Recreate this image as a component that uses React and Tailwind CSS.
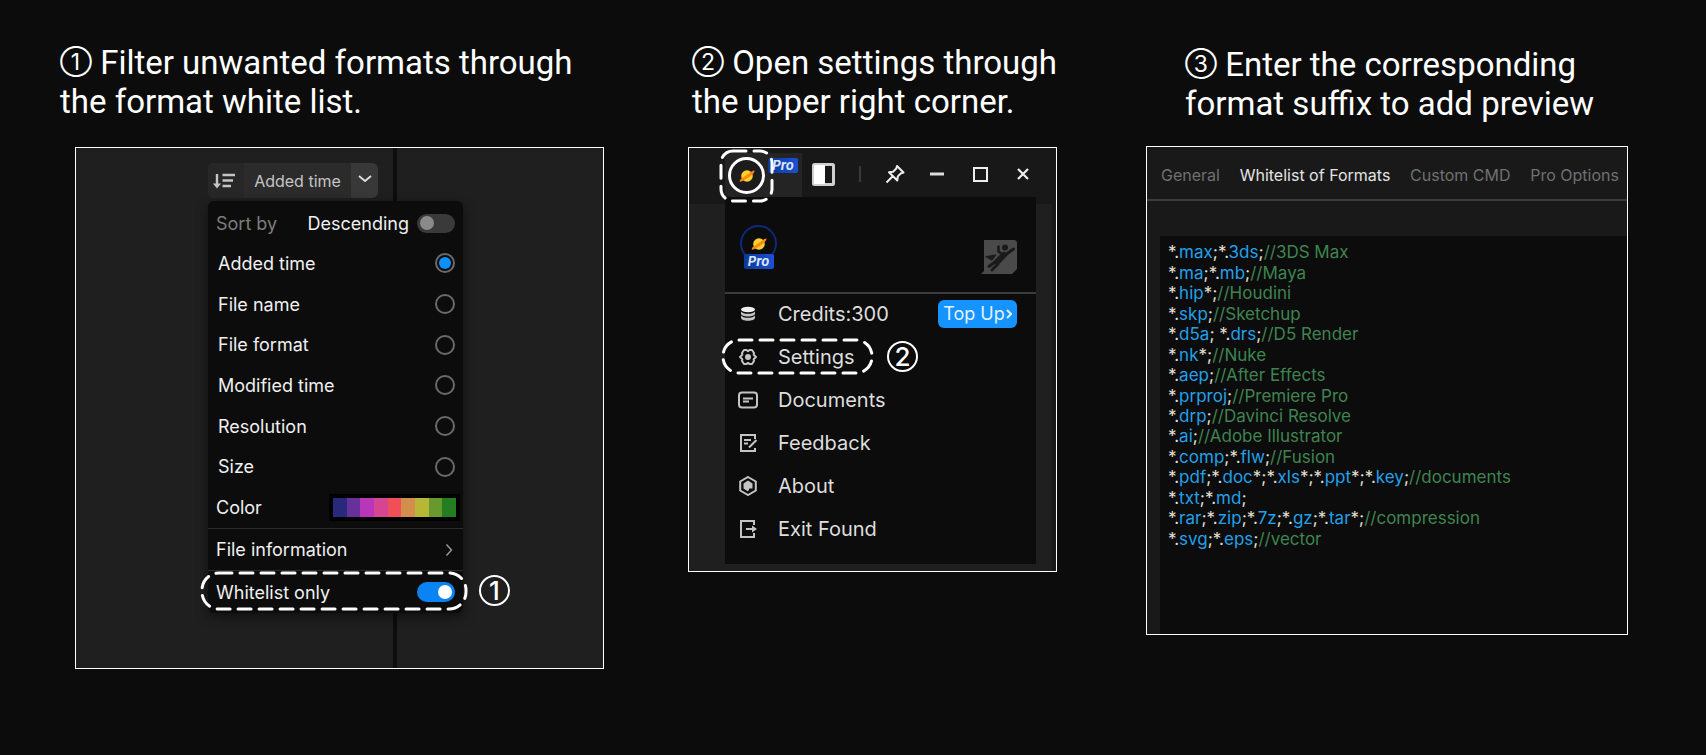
import { useState } from "react";

const SORT_OPTIONS = [
  "Added time",
  "File name",
  "File format",
  "Modified time",
  "Resolution",
  "Size",
];

const SWATCHES = [
  "bg-[#28287d]",
  "bg-[#67309a]",
  "bg-[#b836b8]",
  "bg-[#d64592]",
  "bg-[#f04f57]",
  "bg-[#d18f4b]",
  "bg-[#b8b636]",
  "bg-[#67992e]",
  "bg-[#257d22]",
];

const MENU_ITEMS = ["Credits:300", "Settings", "Documents", "Feedback", "About", "Exit Found"];

const FORMATS = [
  ["*.max;*.3ds;", "//3DS Max"],
  ["*.ma;*.mb;", "//Maya"],
  ["*.hip*;", "//Houdini"],
  ["*.skp;", "//Sketchup"],
  ["*.d5a; *.drs;", "//D5 Render"],
  ["*.nk*;", "//Nuke"],
  ["*.aep;", "//After Effects"],
  ["*.prproj;", "//Premiere Pro"],
  ["*.drp;", "//Davinci Resolve"],
  ["*.ai;", "//Adobe Illustrator"],
  ["*.comp;*.flw;", "//Fusion"],
  ["*.pdf;*.doc*;*.xls*;*.ppt*;*.key;", "//documents"],
  ["*.txt;*.md;", ""],
  ["*.rar;*.zip;*.7z;*.gz;*.tar*;", "//compression"],
  ["*.svg;*.eps;", "//vector"],
];

const TABS = ["General", "Whitelist of Formats", "Custom CMD", "Pro Options"];

function Heading({ number, className = "", children }) {
  return (
    <h2
      className={`whitespace-nowrap text-[33px] leading-[39px] text-white font-[Roboto,sans-serif] ${className}`}
    >
      <span className="align-[4px] text-[23px] leading-none font-[Inter,sans-serif]">{number}</span> {children}
    </h2>
  );
}

function Step({ number }) {
  return (
    <span className="flex size-[31px] shrink-0 items-center justify-center rounded-full border-2 border-white text-[26px] leading-none font-medium text-white font-[Inter,sans-serif]">
      {number}
    </span>
  );
}

// Dashed outline drawn over the control that the step points to
function Dashes({ className, radius, dash = "13 8" }) {
  return (
    <svg className={`pointer-events-none absolute overflow-visible ${className}`} aria-hidden="true">
      <rect
        width="100%"
        height="100%"
        rx={radius}
        fill="none"
        stroke="#fff"
        strokeWidth="3"
        strokeDasharray={dash}
        strokeLinecap="round"
      />
    </svg>
  );
}

function Planet({ className }) {
  return (
    <svg viewBox="0 0 16 14" className={className} aria-hidden="true">
      <circle cx="8" cy="7" r="5.8" fill="#fdd02f" />
      <path d="M.8 12.4C.2 11 3 9.200 7 6.600 11 3.900 14.400 1 15.300 1.700 16.200 2.600 13.300 5.900 9.400 8.500 5.500 11.200 1.500 13.400.8 12.400Z" fill="#f88c12" />
    </svg>
  );
}

function ProBadge() {
  return (
    <span className="flex h-[15px] w-[30px] items-center justify-center rounded-xs bg-linear-to-r from-[#0b3a96] to-[#1b50d8] text-[13px] leading-none font-bold text-[#dce6fb] italic font-[Inter,sans-serif]">
      Pro
    </span>
  );
}

function SortPanel() {
  const [sort, setSort] = useState("Added time");
  const [descending, setDescending] = useState(false);
  const [whitelist, setWhitelist] = useState(true);

  return (
    <div className="relative ml-[15px] h-[522px] border border-white bg-[#1f1f1f] pt-[15px] pl-[132px]">
      <div className="absolute inset-y-0 left-[317px] w-1 bg-[#0d0d0d]" />

      <div className="relative flex h-[35px] w-[170px] overflow-hidden rounded-md bg-[#2b2b2b] text-[#c4c4c4]">
        <button type="button" aria-label="Sort order" className="flex w-9 items-center justify-center bg-[#272727] pr-1">
          <svg viewBox="0 0 24 18" className="h-[18px] w-6" fill="none" stroke="currentColor" strokeWidth="2.400" aria-hidden="true">
            <path d="M5 2v11" />
            <path d="M1 11.500h8L5 16.500Z" fill="currentColor" stroke="none" />
            <path d="M10.500 3h12.500M10.500 8.500h10.500M10.500 14h8.500" />
          </svg>
        </button>
        <button type="button" className="flex-1 text-[16px]">
          Added time
        </button>
        <button type="button" aria-label="Open sort menu" className="flex w-[27px] items-center justify-center bg-[#383838] pb-1">
          <svg viewBox="0 0 14 8" className="h-2 w-3.5" fill="none" stroke="#e0e0e0" strokeWidth="1.800" aria-hidden="true">
            <path d="M1 1l6 5 6-5" />
          </svg>
        </button>
      </div>

      <div className="relative mt-[3px] w-[255px] rounded-md bg-[#0c0c0c] pt-0.5 text-[18px] text-[#f0f0f0] shadow-[0_4px_12px_rgba(0,0,0,0.5)]">
        <label className="flex h-10 items-center pr-2 pl-2">
          <span className="text-[#7c7c7c]">Sort by</span>
          <span className="mr-2 ml-auto">Descending</span>
          <input
            type="checkbox"
            checked={descending}
            onChange={(e) => setDescending(e.target.checked)}
            className="flex h-[19px] w-[38px] appearance-none items-center rounded-full bg-[#3a3a3a] px-[3px] before:size-3.5 before:rounded-full before:bg-[#8a8a8a] checked:bg-[#0a84f5] checked:before:ml-auto checked:before:bg-white"
          />
        </label>

        <div className="grid h-[285px] auto-rows-fr">
          {SORT_OPTIONS.map((option) => (
            <label key={option} className="flex items-center justify-between pr-2 pl-2.5">
              {option}
              <input
                type="radio"
                name="sort"
                checked={sort === option}
                onChange={() => setSort(option)}
                className="flex size-5 appearance-none items-center justify-center rounded-full border-2 border-[#6a6a6a] before:size-3 before:rounded-full checked:before:bg-[#0a90ff]"
              />
            </label>
          ))}
          <div className="flex items-center justify-between pr-[3px] pl-2">
            Color
            <div className="flex h-[27px] w-[131px] bg-black p-1">
              {SWATCHES.map((color) => (
                <button key={color} type="button" aria-label="Color" className={`flex-1 ${color}`} />
              ))}
            </div>
          </div>
        </div>

        <button type="button" className="flex h-[42px] w-full items-center justify-between border-t border-[#2c2c2c] pr-2.5 pl-2">
          File information
          <svg viewBox="0 0 8 12" className="h-3 w-2" fill="none" stroke="#9a9a9a" strokeWidth="1.400" aria-hidden="true">
            <path d="M1.500 0.500l5 5.500-5 5.500" />
          </svg>
        </button>

        <div className="relative border-t border-[#2c2c2c]">
          <label className="flex h-[42px] items-center justify-between pr-2 pl-2">
            Whitelist only
            <input
              type="checkbox"
              checked={whitelist}
              onChange={(e) => setWhitelist(e.target.checked)}
              className="flex h-5 w-[38px] appearance-none items-center rounded-full bg-[#3a3a3a] px-[3px] before:size-3.5 before:rounded-full before:bg-[#8a8a8a] checked:bg-[#0a84f5] checked:before:ml-auto checked:before:bg-white"
            />
          </label>
          <Dashes className="top-0.5 -left-1.5 h-9 w-[264px]" radius="17" />
          <div className="absolute top-1 left-[271px]">
            <Step number="1" />
          </div>
        </div>
      </div>
    </div>
  );
}

function MenuIcon({ name }) {
  return (
    <svg viewBox="0 0 20 20" className="size-5" fill="none" stroke="#c4c4c4" strokeWidth="2" aria-hidden="true">
      {name === "Credits:300" && (
        <g fill="#c4c4c4" stroke="none">
          <ellipse cx="10" cy="5.500" rx="7" ry="2.800" fill="#eee" />
          <path d="M3 7.500c1 1.800 4 2.300 7 2.300s6-.5 7-2.300v2.200c0 1.500-3 2.800-7 2.800s-7-1.300-7-2.800Z" />
          <path d="M3 11.500c1 1.800 4 2.300 7 2.300s6-.5 7-2.300v2.200c0 1.700-3 3-7 3s-7-1.300-7-3Z" />
        </g>
      )}
      {name === "Settings" && (
        <>
          <path d="M6 3h2.500L10 4.200 11.500 3H14l2 3-.3 1.800L18 10l-2.300 2.200.3 1.800-2 3h-2.500L10 15.800 8.500 17H6l-2-3 .3-1.800L2 10l2.300-2.200L4 6Z" strokeLinejoin="round" />
          <circle cx="10" cy="10" r="3" fill="#c4c4c4" stroke="none" />
        </>
      )}
      {name === "Documents" && (
        <>
          <rect x="1" y="2.500" width="18" height="15" rx="3" />
          <path d="M5 8.500h10M5 11.500h6" />
        </>
      )}
      {name === "Feedback" && <path d="M17 6V2H3v16h14v-3M6 7h7M6 10.500h4M11 14.500l7.500-7.500" />}
      {name === "About" && (
        <>
          <path d="M10 1l7.800 4.500v9L10 19l-7.800-4.500v-9Z" />
          <path d="M10 4.500l4.500 3v5h-3L10 15.500l-4.500-3v-5Z" fill="#c4c4c4" stroke="none" />
        </>
      )}
      {name === "Exit Found" && (
        <>
          <path d="M16 6V2H3v16h13v-4M8 10h8" />
          <path d="M14 6.500l5 3.500-5 3.500Z" fill="#c4c4c4" stroke="none" />
        </>
      )}
    </svg>
  );
}

function AccountPanel() {
  return (
    <div className="h-[425px] border border-white bg-[#181818]">
      <div className="flex h-[49px] pt-[5px] pr-[27px] pl-9 text-white">
        <button type="button" aria-label="Account" className="relative w-[77px] bg-[#242424]">
          <span className="absolute top-1 left-[3px] flex size-[37px] items-center justify-center rounded-full border-3 border-white bg-[#1c1c1c]">
            <Planet className="h-3.5 w-4" />
          </span>
          <span className="absolute top-[5px] right-1">
            <ProBadge />
          </span>
          <Dashes className="-top-0.5 -left-1 h-[50px] w-[51px]" radius="12" />
        </button>
        <div className="flex flex-1 items-center justify-between pb-0.5 pl-2.5">
          <div className="flex items-center gap-6">
            <button type="button" aria-label="Toggle sidebar">
              <svg viewBox="0 0 23 23" className="size-[23px]" aria-hidden="true">
                <rect x="1.500" y="1.500" width="20" height="20" rx="1" fill="#181818" stroke="#d0d0d0" strokeWidth="3" />
                <path d="M2 2h11v19H2Z" fill="#fff" />
              </svg>
            </button>
            <span className="h-4 w-0.5 bg-[#3a3a3a]" />
            <button type="button" aria-label="Pin window">
              <svg viewBox="0 0 20 20" className="size-5" fill="none" stroke="#eee" strokeWidth="2" strokeLinejoin="round" aria-hidden="true">
                <path d="M12 2l6.500 6.500-2.500.7-3.200 3.200-.5 4.100-8.300-8.300 4.100-.5L11.300 4.500ZM7.500 12.500L1.500 18.500" />
              </svg>
            </button>
          </div>
          <div className="flex items-center gap-[29px]">
            <button type="button" aria-label="Minimize">
              <svg viewBox="0 0 14 14" className="size-3.5" aria-hidden="true">
                <path d="M0 7h14" stroke="#ddd" strokeWidth="3" />
              </svg>
            </button>
            <button type="button" aria-label="Maximize">
              <svg viewBox="0 0 15 15" className="size-[15px]" aria-hidden="true">
                <path d="M1 1h13v13H1Z" fill="none" stroke="#eee" strokeWidth="2" />
              </svg>
            </button>
            <button type="button" aria-label="Close">
              <svg viewBox="0 0 12 12" className="size-3" aria-hidden="true">
                <path d="M1 1l10 10M11 1L1 11" stroke="#eee" strokeWidth="2.200" />
              </svg>
            </button>
          </div>
        </div>
      </div>

      <div className="mt-[7px] mr-1 flex h-[367px] bg-[#1f1f1f] pr-4 pl-9">
        <div className="-mt-[7px] h-[367px] flex-1 bg-[#0c0c0c]">
          <div className="flex h-[97px] justify-between border-b-2 border-[#3c3c3c] pt-7 pr-[19px] pl-[15px]">
            <div className="flex flex-col items-center">
              <span className="flex size-[37px] shrink-0 items-center justify-center rounded-full border-2 border-[#0c2a78]">
                <Planet className="h-3.5 w-4" />
              </span>
              <span className="relative -mt-2">
                <ProBadge />
              </span>
            </div>
            <svg viewBox="0 0 36 34" className="mt-[15px] h-[34px] w-9" aria-hidden="true">
              <path d="M3 0h30a3 3 0 0 1 3 3v26l-5 5H0l3-3Z" fill="#4a4a4a" />
              <g fill="none" stroke="#1a1a1a" strokeWidth="3" strokeLinecap="round" strokeLinejoin="round">
                <circle cx="24" cy="7.500" r="3" fill="#1a1a1a" stroke="none" />
                <path d="M32.500 9L25 14.500" />
                <path d="M17.500 6.500v5l4 3" strokeWidth="2.500" />
                <path d="M23 15L16 22" strokeWidth="6" />
                <path d="M14 22L8 26.500M17 24l-6 6" />
                <path d="M5 16.500l10-1.500-4 5Z" fill="#1a1a1a" strokeWidth="1" />
              </g>
            </svg>
          </div>

          <ul className="-mt-0.5 text-[20px] text-[#dedede]">
            {MENU_ITEMS.map((name) => (
              <li key={name} className="relative flex h-[43px] items-center justify-between pr-[19px] pl-[13px]">
                <button type="button" className="flex items-center gap-5 whitespace-nowrap">
                  <MenuIcon name={name} />
                  {name}
                </button>
                {name === "Credits:300" && (
                  <button
                    type="button"
                    className="flex h-7 w-[79px] items-center justify-center gap-px rounded-md bg-[#1593ff] text-[18px] text-[#e4f2ff]"
                  >
                    Top Up
                    <svg viewBox="0 0 6 10" className="h-2.5 w-1.5" fill="none" stroke="currentColor" strokeWidth="2" aria-hidden="true">
                      <path d="M1 1l4 4-4 4" />
                    </svg>
                  </button>
                )}
                {name === "Settings" && (
                  <>
                    <Dashes className="top-[5px] -left-0.5 h-[33px] w-[149px]" radius="16" />
                    <div className="absolute top-1.5 left-[162px]">
                      <Step number="2" />
                    </div>
                  </>
                )}
              </li>
            ))}
          </ul>
        </div>
      </div>
    </div>
  );
}

function FormatLine({ rule, note }) {
  return (
    <span className="flex flex-1 items-center whitespace-pre">
      <span>
        {rule.split(/([a-z0-9]+)/).map((part, i) =>
          i % 2 ? (
            <span key={i} className="text-[#23a0ea]">
              {part}
            </span>
          ) : (
            part
          )
        )}
        <span className="text-[#3f8450]">{note}</span>
      </span>
    </span>
  );
}

function FormatsPanel() {
  const [tab, setTab] = useState("Whitelist of Formats");

  return (
    <div className="ml-[5px] flex h-[489px] flex-col border border-white bg-[#191919]">
      <nav className="flex h-[54px] items-center justify-between border-b-2 border-[#3c3c3c] pt-1 pr-2 pl-3.5 text-[16px]">
        {TABS.map((name) => (
          <button
            key={name}
            type="button"
            onClick={() => setTab(name)}
            className={`whitespace-nowrap ${tab === name ? "text-[#e4e4e4]" : "text-[#707070]"}`}
          >
            {name}
          </button>
        ))}
      </nav>
      <div className="mt-[35px] ml-[13px] flex-1 bg-[#0c0c0c] pt-1.5 pl-2">
        <code className="flex h-[307px] flex-col text-[17px] leading-5 text-[#e6e0d6] font-[Inter,sans-serif]">
          {FORMATS.map(([rule, note]) => (
            <FormatLine key={rule} rule={rule} note={note} />
          ))}
        </code>
      </div>
    </div>
  );
}

export default function App() {
  return (
    <main className="grid min-h-screen grid-cols-[minmax(0,544fr)_minmax(0,369fr)_minmax(0,487fr)] content-start gap-x-21 bg-[#0c0c0c] pt-[43px] pr-[78px] pb-20 pl-[60px] font-[Inter,sans-serif]">
      <section>
        <Heading number="①">
          Filter unwanted formats through
          <br />
          the format white list.
        </Heading>
        <div className="mt-[26px]">
          <SortPanel />
        </div>
      </section>
      <section>
        <Heading number="②" className="ml-1">
          Open settings through
          <br />
          the upper right corner.
        </Heading>
        <div className="mt-[26px]">
          <AccountPanel />
        </div>
      </section>
      <section>
        <Heading number="③" className="mt-0.5 ml-11">
          Enter the corresponding
          <br />
          format suffix to add preview
        </Heading>
        <div className="mt-[23px]">
          <FormatsPanel />
        </div>
      </section>
    </main>
  );
}
